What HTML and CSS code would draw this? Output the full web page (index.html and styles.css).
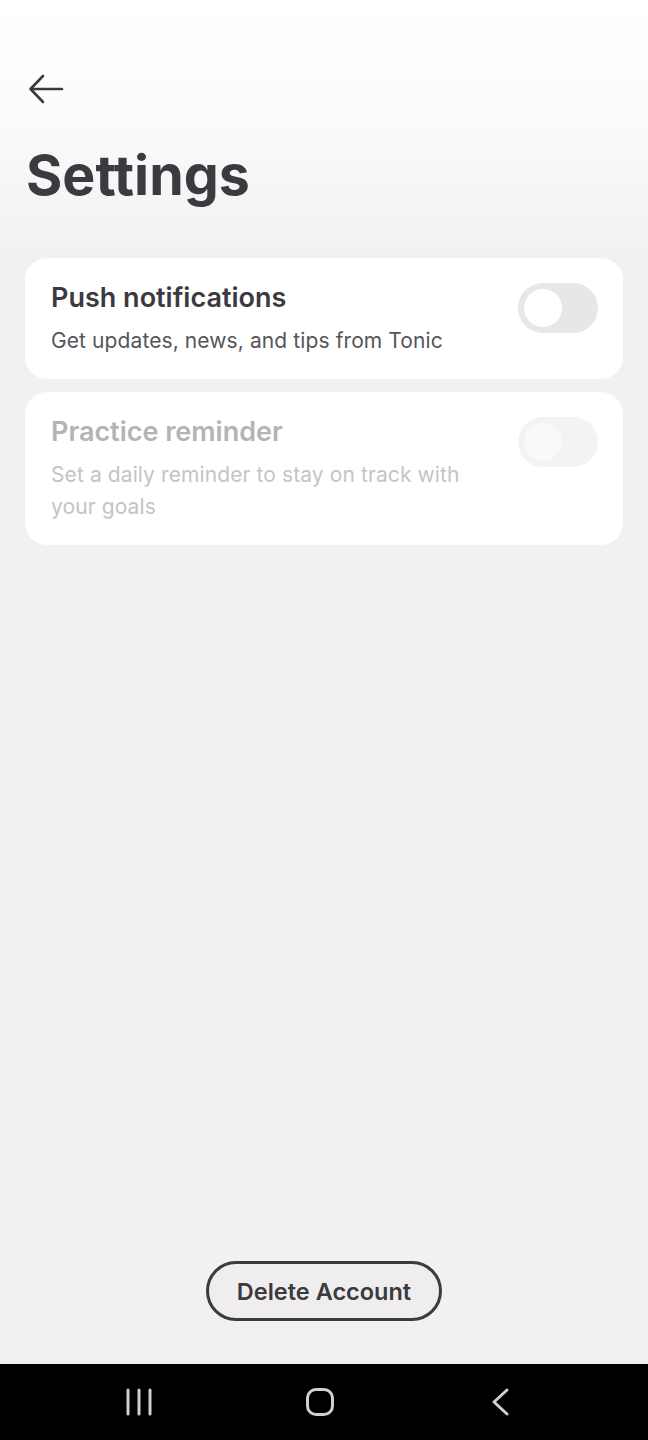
FILE: index.html
```html
<!DOCTYPE html>
<html>
<head>
<meta charset="utf-8">
<link rel="stylesheet" href="styles.css">
</head>
<body>
<div class="screen">
  <header class="top">
    <button class="back" aria-label="Back">
      <svg width="36" height="30" viewBox="0 0 36 30"><path d="M34 15H3M15 2L2.5 15L15 28" fill="none" stroke="#3a3a40" stroke-width="2.6" stroke-linecap="round" stroke-linejoin="round"/></svg>
    </button>
    <h1 class="title">Settings</h1>
  </header>
  <main class="list">
    <section class="card">
      <div class="card-text">
        <h2 class="card-title">Push notifications</h2>
        <p class="card-sub">Get updates, news, and tips from Tonic</p>
      </div>
      <div class="toggle"><span class="knob"></span></div>
    </section>
    <section class="card disabled">
      <div class="card-text">
        <h2 class="card-title">Practice reminder</h2>
        <p class="card-sub">Set a daily reminder to stay on track with your goals</p>
      </div>
      <div class="toggle"><span class="knob"></span></div>
    </section>
  </main>
  <div class="footer">
    <button class="delete">Delete Account</button>
  </div>
  <nav class="sysnav">
    <svg width="28" height="28" viewBox="0 0 28 28"><path d="M3 2v24M14 2v24M25 2v24" stroke="#d0d0d0" stroke-width="3" stroke-linecap="round"/></svg>
    <svg width="28" height="28" viewBox="0 0 28 28"><rect x="1.5" y="1.5" width="25" height="25" rx="8.5" fill="none" stroke="#d0d0d0" stroke-width="3"/></svg>
    <svg width="24" height="30" viewBox="0 0 24 30"><path d="M20 3L7 15L20 27" fill="none" stroke="#d0d0d0" stroke-width="3" stroke-linecap="round" stroke-linejoin="round"/></svg>
  </nav>
</div>
</body>
</html>
```
FILE: styles.css
```css
* { box-sizing: border-box; }
html, body { margin: 0; padding: 0; }
body {
  font-family: "Inter", "Noto Sans", sans-serif;
  color: #3a3a40;
  background: #f2f0f1;
}
.screen {
  width: 648px;
  height: 1440px;
  display: flex;
  flex-direction: column;
  background: linear-gradient(#ffffff 0px, #fbfbfb 120px, #f2f0f1 260px, #f2f0f1 100%);
}
.top {
  padding: 74px 26px 0 26px;
}
.back {
  display: block;
  background: none;
  border: 0;
  padding: 0;
  margin: 0 0 0 2px;
  width: 36px;
  height: 30px;
}
.back svg { display: block; }
.title {
  margin: 36px 0 0 0;
  font-size: 55.5px;
  font-weight: 700;
  line-height: 70px;
  letter-spacing: 0px;
  color: #3a3a40;
}
.list {
  padding: 48px 25px 0 25px;
  display: flex;
  flex-direction: column;
  gap: 13px;
}
.card {
  background: #ffffff;
  border-radius: 22px;
  padding: 23px 25px 22px 26px;
  display: flex;
  align-items: flex-start;
  justify-content: space-between;
}
.card-text { width: 430px; }
.card-title {
  margin: 0;
  font-size: 27px;
  font-weight: 600;
  line-height: 34px;
  color: #3a3a40;
}
.card-sub {
  margin: 10px 0 0 0;
  font-size: 21px;
  line-height: 32px;
  letter-spacing: 0.1px;
  color: #55555a;
}
.toggle {
  width: 80px;
  height: 50px;
  border-radius: 25px;
  background: #e8e6e7;
  display: flex;
  align-items: center;
  padding-left: 6px;
  flex-shrink: 0;
  margin-top: 2px;
}
.knob {
  width: 38px;
  height: 38px;
  border-radius: 50%;
  background: #ffffff;
}
.disabled .card-title { color: #b4b4b6; }
.disabled .card-sub { color: #c4c4c6; }
.disabled .toggle { background: #f4f3f4; }
.disabled .knob { background: #f9f9f9; }
.footer {
  flex: 1;
  display: flex;
  align-items: flex-end;
  justify-content: center;
  padding-bottom: 43px;
}
.delete {
  width: 236px;
  height: 60px;
  border: 3px solid #3a3a40;
  border-radius: 30px;
  background: #efeded;
  font-family: "Inter", "Noto Sans", sans-serif;
  font-size: 23.5px;
  font-weight: 600;
  color: #3a3a40;
  padding: 0;
}
.sysnav {
  height: 76px;
  background: #000000;
  display: flex;
  align-items: center;
  gap: 153px;
  padding: 0 0 0 125px;
}
.sysnav svg { display: block; }
```
